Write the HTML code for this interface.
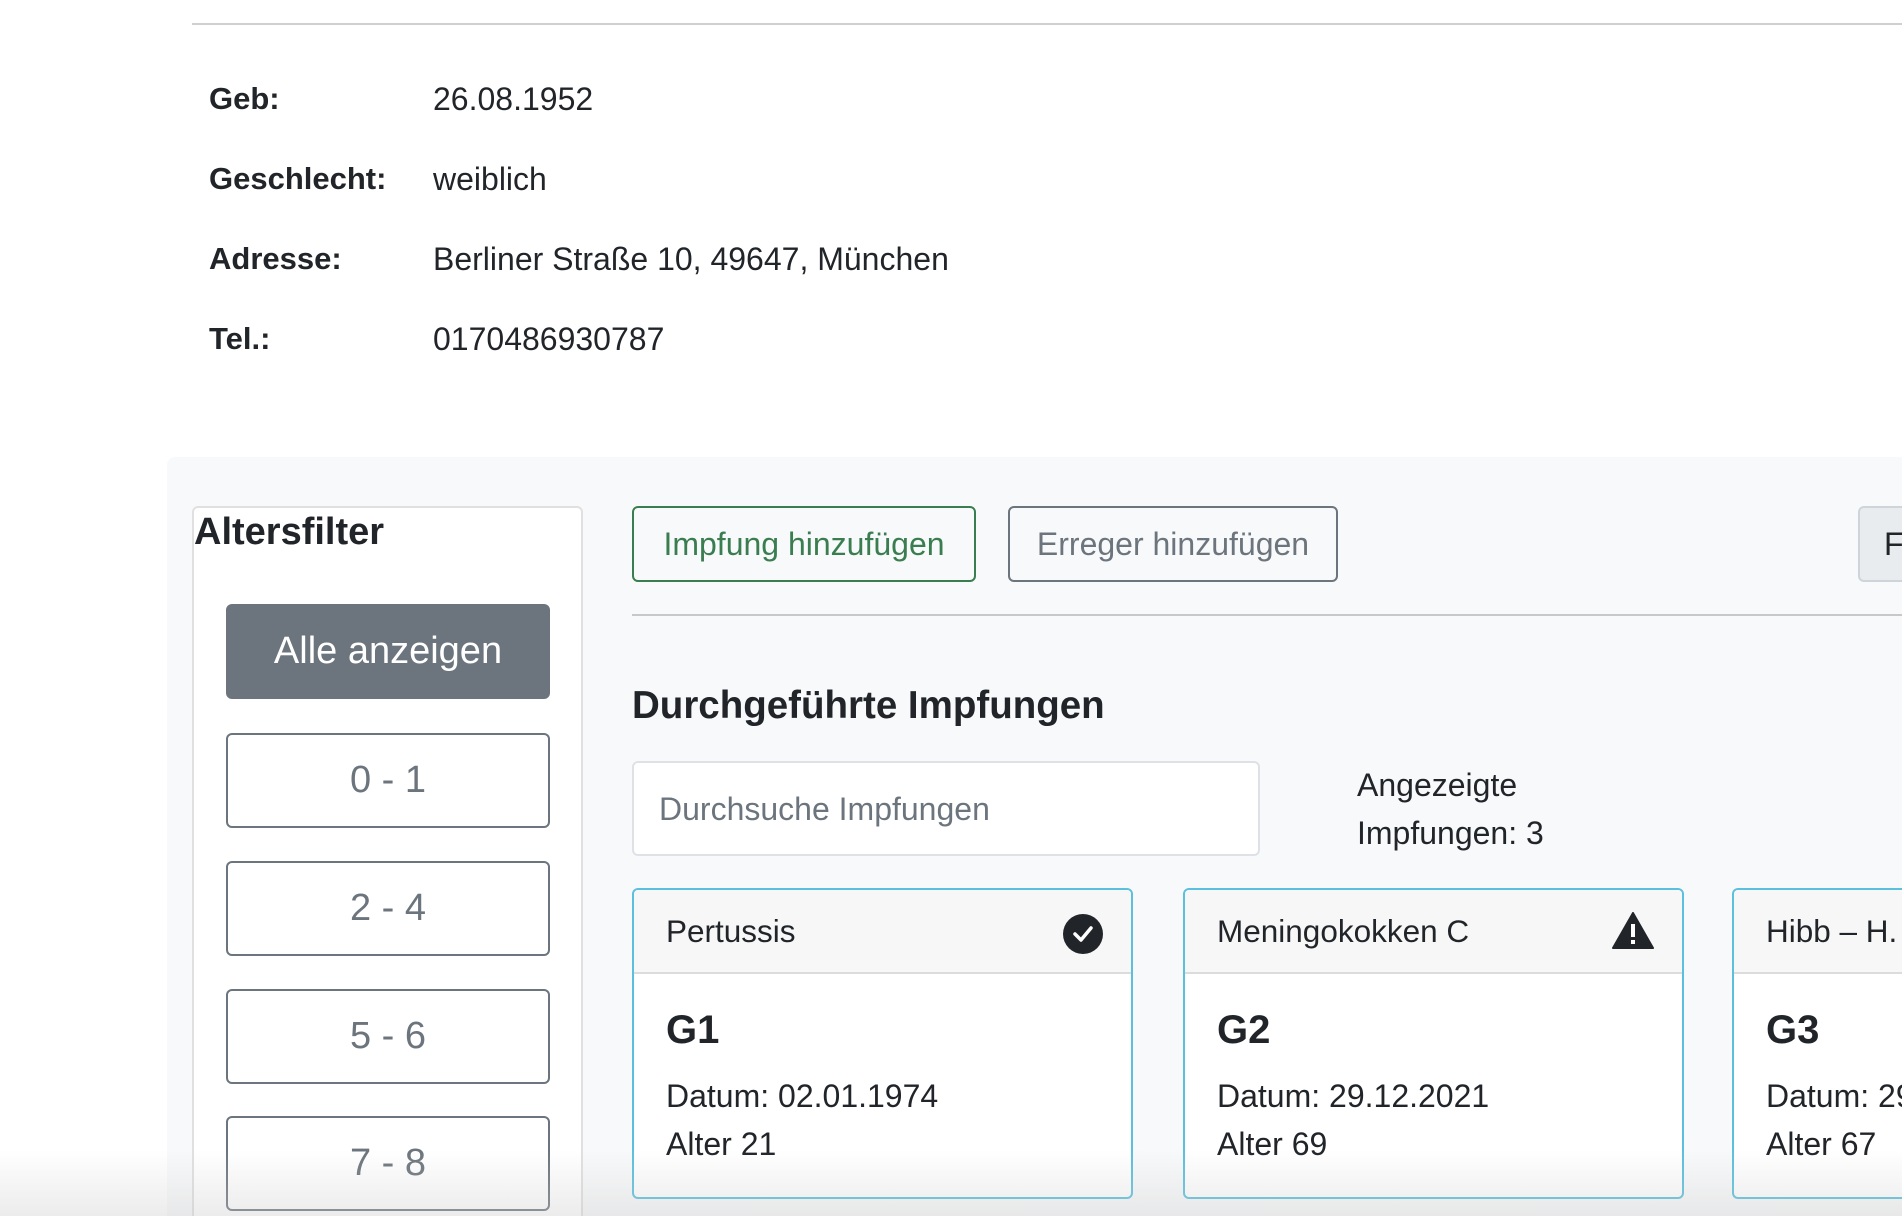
<!DOCTYPE html>
<html style="overflow:hidden;width:1902px;height:1216px"><head><meta charset="utf-8"><style>
*{box-sizing:border-box;margin:0;padding:0}
html,body{overflow:hidden}
body{width:1902px;height:1216px;background:#fff;font-family:"Liberation Sans",sans-serif;color:#212529}
#w{position:relative;width:1902px;height:1216px;overflow:hidden}
.a{position:absolute;white-space:nowrap}
.lbl{font-weight:bold;font-size:31px;left:209px}
.val{font-size:32px;left:433px}
.btn{position:absolute;border:2px solid #6c757d;border-radius:6px;display:flex;align-items:center;justify-content:center;color:#6c757d;font-size:38px;background:#fff;white-space:nowrap}
.card{position:absolute;top:888px;width:501px;height:311px;border:2px solid #5bc0de;border-radius:6px;background:#fff;overflow:hidden;white-space:nowrap}
.card .h{height:84px;background:#f7f7f7;border-bottom:2px solid #dcdcdc;font-size:31.5px;padding:0 0 0 32px;display:flex;align-items:center;position:relative}
.card .g{position:absolute;left:32px;top:118px;font-size:40px;font-weight:bold}
.card .d{position:absolute;left:32px;top:188px;font-size:32px}
.card .l{position:absolute;left:32px;top:236px;font-size:32px}
</style></head><body><div id="w">
<div class="a" style="left:192px;top:23px;width:1710px;height:2px;background:#d0d0d0"></div>
<div class="a lbl" style="top:81px">Geb:</div><div class="a val" style="top:81px">26.08.1952</div>
<div class="a lbl" style="top:161px">Geschlecht:</div><div class="a val" style="top:161px">weiblich</div>
<div class="a lbl" style="top:241px">Adresse:</div><div class="a val" style="top:241px">Berliner Straße 10, 49647, München</div>
<div class="a lbl" style="top:321px">Tel.:</div><div class="a val" style="top:321px">0170486930787</div>

<div class="a" style="left:167px;top:457px;width:1735px;height:759px;background:#f8f9fa;border-radius:8px 0 0 0"></div>
<div class="a" style="left:192px;top:506px;width:391px;height:720px;background:#fff;border:2px solid #e0e0e0;border-radius:6px"></div>
<div class="a" style="left:194px;top:511px;font-size:38px;font-weight:bold">Altersfilter</div>
<div class="btn" style="left:226px;top:604px;width:324px;height:95px;background:#6c757d;color:#fff;border-color:#6c757d">Alle anzeigen</div>
<div class="btn" style="left:226px;top:733px;width:324px;height:95px">0 - 1</div>
<div class="btn" style="left:226px;top:861px;width:324px;height:95px">2 - 4</div>
<div class="btn" style="left:226px;top:989px;width:324px;height:95px">5 - 6</div>
<div class="btn" style="left:226px;top:1116px;width:324px;height:95px">7 - 8</div>

<div class="btn" style="left:632px;top:506px;width:344px;height:76px;border-color:#3a7d50;color:#3a7d50;font-size:32px;background:transparent">Impfung hinzufügen</div>
<div class="btn" style="left:1008px;top:506px;width:330px;height:76px;font-size:32px;background:transparent">Erreger hinzufügen</div>
<div class="btn" style="left:1858px;top:506px;width:60px;height:76px;font-size:32px;background:#e9ecef;border-color:#ced4da;color:#212529;justify-content:flex-start;padding-left:24px;border-right:none;border-radius:6px 0 0 6px">F</div>
<div class="a" style="left:632px;top:614px;width:1270px;height:2px;background:#c8c8c8"></div>
<div class="a" style="left:632px;top:684px;font-size:38.5px;font-weight:bold">Durchgeführte Impfungen</div>
<div class="a" style="left:632px;top:761px;width:628px;height:95px;background:#fff;border:2px solid #dee2e6;border-radius:6px"></div>
<div class="a" style="left:659px;top:791px;font-size:32px;color:#6c757d">Durchsuche Impfungen</div>
<div class="a" style="left:1357px;top:761px;font-size:32px;line-height:48px">Angezeigte<br>Impfungen: 3</div>

<div class="card" style="left:632px"><div class="h">Pertussis
<svg style="position:absolute;right:28px;top:24px" width="40" height="40" viewBox="0 0 40 40"><circle cx="20" cy="20" r="20" fill="#212529"/><path d="M12 20l6 6 10-12" stroke="#fff" stroke-width="3.5" fill="none" stroke-linecap="round" stroke-linejoin="round"/></svg></div>
<div class="g">G1</div><div class="d">Datum: 02.01.1974</div><div class="l">Alter 21</div></div>
<div class="card" style="left:1183px"><div class="h">Meningokokken C
<svg style="position:absolute;right:28px;top:22px" width="42" height="38" viewBox="0 0 42 38"><path d="M21 1L41 36H1Z" fill="#212529" stroke="#212529" stroke-width="2" stroke-linejoin="round"/><rect x="19" y="12" width="4" height="13" fill="#fff"/><rect x="19" y="28" width="4" height="4" fill="#fff"/></svg></div>
<div class="g">G2</div><div class="d">Datum: 29.12.2021</div><div class="l">Alter 69</div></div>
<div class="card" style="left:1732px;width:170px;border-right:none;border-radius:6px 0 0 6px"><div class="h">Hibb – H.</div>
<div class="g">G3</div><div class="d">Datum: 29</div><div class="l">Alter 67</div></div>
<div class="a" style="left:0;top:1150px;width:1902px;height:66px;background:linear-gradient(rgba(200,200,200,0),rgba(200,200,200,.35))"></div>
</div></body></html>
